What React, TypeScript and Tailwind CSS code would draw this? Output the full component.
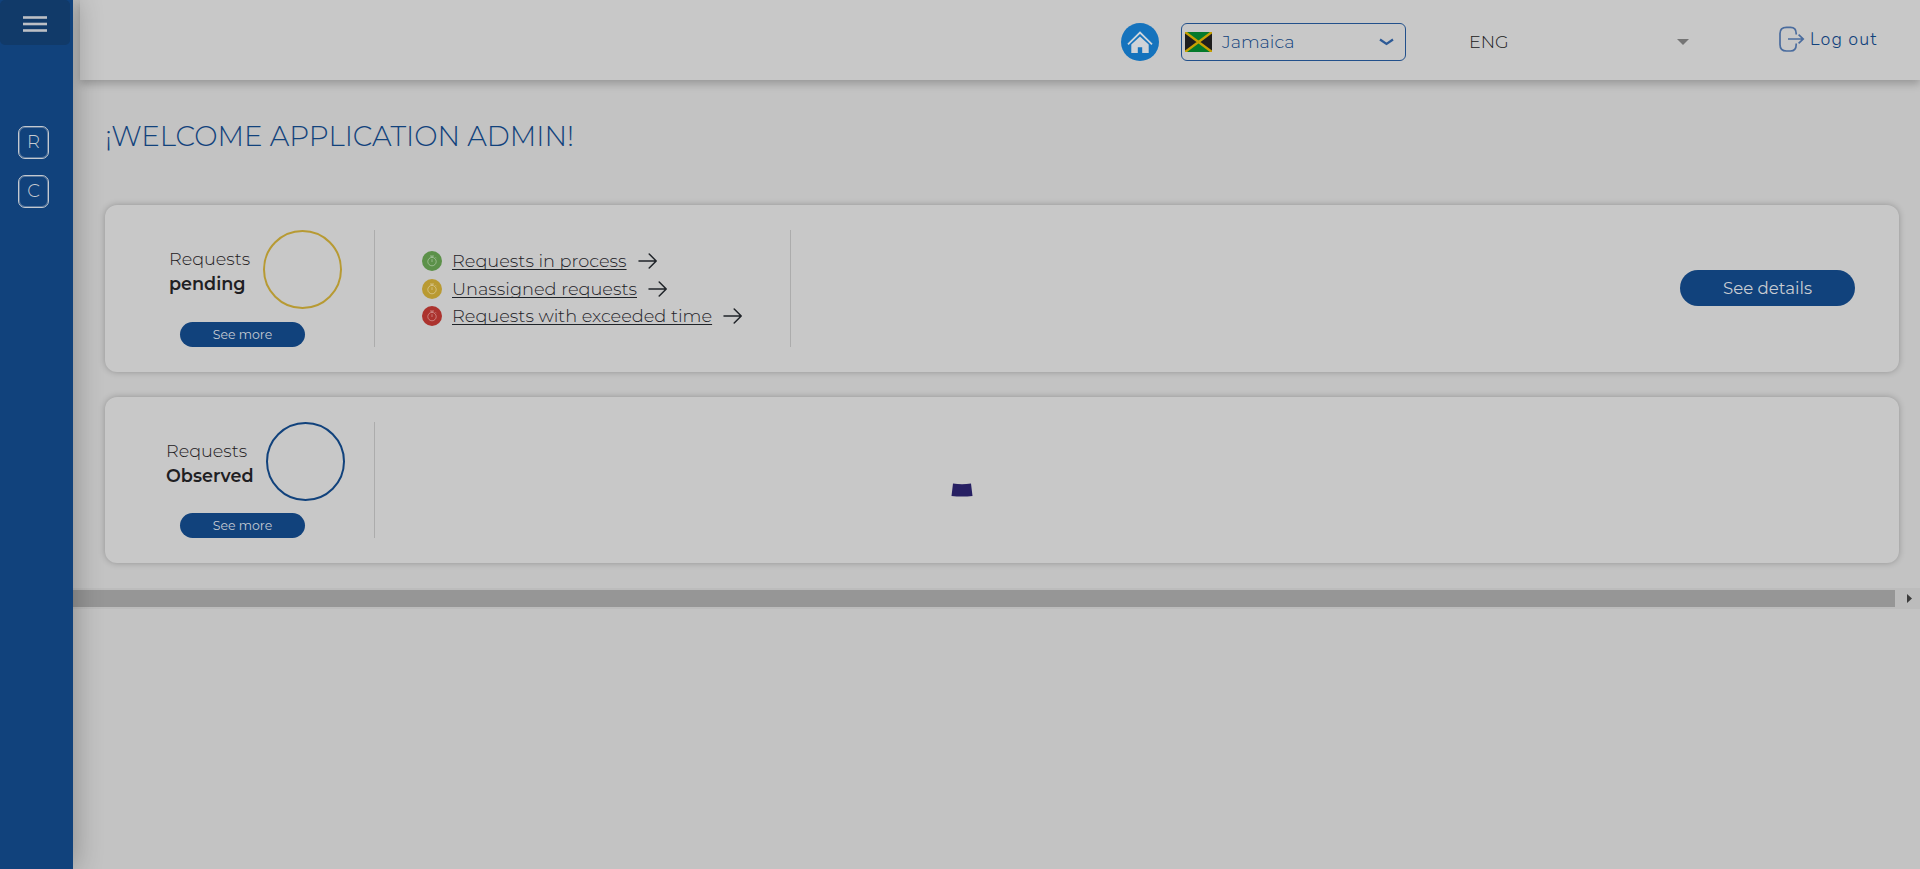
import React from "react";

function HomeIcon() {
  return (
    <svg className="h-[38px] w-[38px] shrink-0" viewBox="0 0 38 38">
      <circle cx="19" cy="19" r="19" fill="#1573bd" />
      <path d="M7 21.3 L19 9.5 L31 21.3" fill="none" stroke="#cfd6dc" strokeWidth="1.8" />
      <path d="M10.3 21.5 L19 13.5 L27.7 21.5 V30 H21.2 V24.2 H16.8 V30 H10.3 Z" fill="#cfd3d8" />
    </svg>
  );
}

function JamaicaFlag() {
  return (
    <svg className="h-5 w-[27px] shrink-0" viewBox="0 0 27 20">
      <rect width="27" height="20" fill="#047a2b" />
      <path d="M0 0 L13.5 10 L0 20 Z M27 0 L13.5 10 L27 20 Z" fill="#1e1e1e" />
      <path d="M0 0 L27 20 M27 0 L0 20" stroke="#c6a002" strokeWidth="2.4" />
    </svg>
  );
}

function LogoutIcon() {
  return (
    <svg className="h-[26px] w-[26px] shrink-0" viewBox="0 0 26 26" fill="none" stroke="#4a6c9e" strokeWidth="1.7">
      <path d="M17.2 8.6 V7.5 C17.2 3.5 15.2 1.3 11.5 1.3 H7.5 C3.3 1.3 1 3.5 1 7.5 V18.5 C1 22.6 3.3 25 7.5 25 H11.5 C15.2 25 17.2 22.6 17.2 18.5 V17.4" />
      <path d="M9 13 H24 M19.6 8.6 L24.2 13 L19.6 17.4" />
    </svg>
  );
}

function Stopwatch({ color }: { color: string }) {
  return (
    <svg className="h-5 w-5 shrink-0" viewBox="0 0 20 20">
      <circle cx="10" cy="10" r="10" fill={color} />
      <g fill="none" stroke="#fff" strokeOpacity="0.4" strokeWidth="0.9">
        <circle cx="10" cy="10.6" r="4.2" />
        <path d="M8 5 H12 M10 5 V6.4 M10 8.2 V11 M13.6 6.4 L14.4 7.2" />
      </g>
    </svg>
  );
}

function Arrow() {
  return (
    <svg className="h-4 w-[19px] shrink-0" viewBox="0 0 19 16" fill="none" stroke="#1f2328" strokeWidth="1.5" strokeLinecap="round" strokeLinejoin="round">
      <path d="M1 8 H18 M11.2 1 L18.2 8 L11.2 15" />
    </svg>
  );
}

function MenuButton() {
  return (
    <button className="flex h-[45px] w-[70px] items-start rounded-[5px] bg-[#113a69] pt-4 pl-[23px]">
      <svg className="h-4 w-6" viewBox="0 0 24 16" fill="#bcbfc5">
        <rect y="0.2" width="24" height="2.6" />
        <rect y="6.7" width="24" height="2.6" />
        <rect y="13.2" width="24" height="2.6" />
      </svg>
    </button>
  );
}

function NavLetter({ letter }: { letter: string }) {
  return (
    <div className="h-[33px] w-[31px] rounded-[7px] border border-[#c4c9d0] text-center shadow-[inset_0_0_0_1px_rgba(196,201,208,0.4)]">
      {letter}
    </div>
  );
}

function Summary({ label, ring, textPad, buttonTop }: { label: string; ring: string; textPad: string; buttonTop: string }) {
  return (
    <div className="flex h-full w-[270px] shrink-0 flex-col border-r border-[#acacac]">
      <div className={`flex h-[79px] gap-[13px] ${textPad}`}>
        <div className="pt-4 text-[17.6px] leading-[25px] whitespace-nowrap text-[#1f2023]">
          <div className="font-light">Requests</div>
          <div className="font-semibold">{label}</div>
        </div>
        <div className={`h-[79px] w-[79px] shrink-0 rounded-full border-2 ${ring}`} />
      </div>
      <button className={`ml-[75px] h-[25px] w-[125px] shrink-0 rounded-full bg-[#11427c] text-[12.5px] leading-[25px] text-[#c5cbd3] ${buttonTop}`}>See more</button>
    </div>
  );
}

function RequestLink({ color, text, className }: { color: string; text: string; className: string }) {
  return (
    <div className={`flex h-5 items-center whitespace-nowrap ${className}`}>
      <Stopwatch color={color} />
      <a className="ml-[10px] text-[17.75px] leading-5 font-light text-[#1f2328] underline decoration-1 underline-offset-2 [text-decoration-skip-ink:none]">{text}</a>
      <span className="ml-[11px] flex">
        <Arrow />
      </span>
    </div>
  );
}

export default function App() {
  return (
    <div className="flex h-[869px] w-[1920px] overflow-hidden bg-[#c3c3c3] font-['Montserrat','Inter',sans-serif]">
      <aside className="z-10 flex w-[73px] shrink-0 flex-col bg-[#11427c] shadow-[0_0_30px_rgba(0,0,0,0.32)]">
        <MenuButton />
        <div className="mt-[81px] ml-[18px] flex flex-col gap-4 text-[18px] leading-[30px] font-light text-[#c8ccd2]">
          <NavLetter letter="R" />
          <NavLetter letter="C" />
        </div>
      </aside>

      <div className="flex min-w-0 flex-1 flex-col">
        <header className="ml-[7px] flex h-20 shrink-0 bg-[#c8c8c8] pl-[1041px] shadow-[0_4px_8px_rgba(0,0,0,0.22)]">
          <div className="flex items-center pt-1">
            <HomeIcon />
            <div className="ml-[22px] flex h-[38px] w-[225px] items-center rounded-[6px] border border-[#22508b] pr-[11px] pl-[3px]">
              <JamaicaFlag />
              <span className="ml-[10px] flex-1 text-[17.6px] font-light text-[#11427c]">Jamaica</span>
              <svg className="h-2 w-[15px]" viewBox="0 0 15 8" fill="none" stroke="#2d5a96" strokeWidth="2.2">
                <path d="M1 1.5 L7.5 6 L14 1.5" />
              </svg>
            </div>
            <span className="ml-[63px] w-[208px] text-[17.6px] font-light text-[#202020]">ENG</span>
            <svg className="h-[6px] w-3" viewBox="0 0 12 6">
              <path d="M0 0 H12 L6 6 Z" fill="#757575" />
            </svg>
          </div>
          <div className="mt-[26px] ml-[90px] flex h-[26px] items-center gap-[5px]">
            <LogoutIcon />
            <span className="font-['Nunito','Montserrat',sans-serif] text-[18px] font-light tracking-[1px] whitespace-nowrap text-[#11427c]">Log out</span>
          </div>
        </header>

        <main className="flex h-[508px] shrink-0 flex-col pr-[21px] pl-8">
          <h1 className="mt-[38px] h-9 text-[27.75px] leading-9 font-light whitespace-nowrap text-[#11427c]">¡WELCOME APPLICATION ADMIN!</h1>

          <section className="mt-[51px] flex h-[167px] shrink-0 rounded-[12px] bg-[#c8c8c8] py-[25px] shadow-[0_0_6px_rgba(0,0,0,0.25)]">
            <Summary label="pending" ring="border-[#b79a33]" textPad="pl-16" buttonTop="mt-[13px]" />
            <div className="flex w-[416px] shrink-0 flex-col border-r border-[#acacac] pt-[21px] pl-[47px]">
              <RequestLink color="#5c9149" text="Requests in process" className="" />
              <RequestLink color="#b99a32" text="Unassigned requests" className="mt-2" />
              <RequestLink color="#ac332e" text="Requests with exceeded time" className="mt-[7px]" />
            </div>
            <div className="flex flex-1 justify-end pr-11">
              <button className="mt-10 h-9 w-[175px] rounded-full bg-[#11427c] pt-px text-[16.6px] text-[#c8ccd2]">See details</button>
            </div>
          </section>

          <section className="mt-[25px] flex h-[166px] shrink-0 rounded-[12px] bg-[#c8c8c8] py-[25px] shadow-[0_0_6px_rgba(0,0,0,0.25)]">
            <Summary label="Observed" ring="border-[#11427c]" textPad="pl-[61px]" buttonTop="mt-3" />
            <div className="flex-1 pt-[61px] pl-[576px]">
              <svg className="h-[14px] w-[22px]" viewBox="0 0 22 14">
                <path d="M2 0.5 Q11 2 20 0.5 L21.5 13 Q11 14 0.5 13 Z" fill="#272063" />
              </svg>
            </div>
          </section>
        </main>

        <div className="flex h-[21px] shrink-0 items-center bg-[#bcbcbc]">
          <div className="h-[17px] w-[1822px] bg-[#969696]" />
          <svg className="ml-3 h-[9px] w-[5px]" viewBox="0 0 5 9">
            <path d="M0 0 L5 4.5 L0 9 Z" fill="#3c3c3c" />
          </svg>
        </div>
      </div>
    </div>
  );
}
